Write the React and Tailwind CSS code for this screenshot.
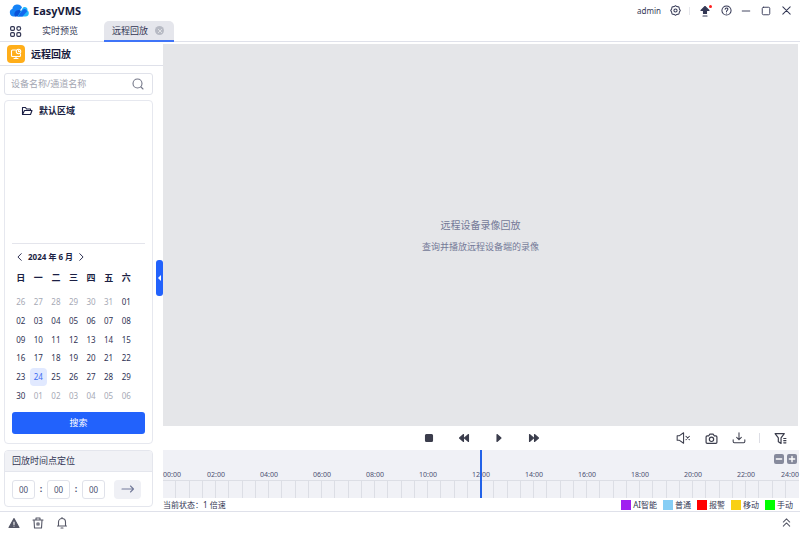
import React from "react";

const weekdays = ["日", "一", "二", "三", "四", "五", "六"];

const days = [
  ...["26", "27", "28", "29", "30", "31"].map((d) => ({ d, out: true })),
  ...Array.from({ length: 30 }, (_, i) => ({ d: String(i + 1).padStart(2, "0"), out: false })),
  ...["01", "02", "03", "04", "05", "06"].map((d) => ({ d, out: true })),
];

const hours = ["02", "04", "06", "08", "10", "12", "14", "16", "18", "20", "22"];

const legend = [
  { label: "AI智能", color: "bg-[#a020f0]" },
  { label: "普通", color: "bg-[#87cef5]" },
  { label: "报警", color: "bg-[#ff0000]" },
  { label: "移动", color: "bg-[#f9d015]" },
  { label: "手动", color: "bg-[#00ff00]" },
];

function Icon({ className = "size-3", children, label }) {
  return (
    <svg
      viewBox="0 0 24 24"
      className={`${className} shrink-0`}
      fill="none"
      stroke="currentColor"
      strokeWidth="2.2"
      strokeLinecap="round"
      strokeLinejoin="round"
      role={label ? "img" : undefined}
      aria-label={label}
      aria-hidden={label ? undefined : true}
    >
      {children}
    </svg>
  );
}

function IconButton({ label, className = "size-3", box = "w-5", children }) {
  return (
    <button type="button" aria-label={label} className={`flex h-5 items-center justify-center ${box}`}>
      <Icon className={className}>{children}</Icon>
    </button>
  );
}

function TitleBar() {
  return (
    <header className="flex h-[21px] shrink-0 items-center pl-[9px] pr-1">
      <svg viewBox="0 0 40 26" className="h-[13px] w-5 shrink-0" aria-hidden="true">
        <path d="M9 25a8 8 0 0 1-2-15.500C7 4 12 1 17 1c5 0 8 3 9 6l-13 18Z" fill="#1683f7" />
        <path d="M12 25c-4-6 1-13 7-13 3 0 5 1 6 3l-5 10Z" fill="#0a53d8" />
        <path d="M17 25 27 9c3-5 11-3 10 4 4 2 4 12-4 12Z" fill="#22b5fb" />
        <path d="m21 20 7-9c4-3 8 0 8 4l-9 10h-8Z" fill="#1268ee" />
      </svg>
      <h1 className="ml-1 text-[11px] leading-4 font-bold text-[#171b3c]">EasyVMS</h1>
      <span className="ml-auto text-[8px]">admin</span>
      <IconButton label="设置" box="ml-1 w-5" className="size-[11px]">
        <path d="M9 3.500 12 1.500l3 2 4.500 1 1 4 2 3.500-2 3.500-1 4-4.500 1-3 2-3-2-4.500-1-1-4-2-3.500 2-3.500 1-4Z" />
        <circle cx="12" cy="12" r="3.500" />
      </IconButton>
      <span className="mx-1 h-2 w-px bg-[#e6e7ec]" />
      <div className="relative">
        <IconButton label="上传" box="w-[22px]">
          <path d="M12 3 4 11h5v6h6v-6h5Z" fill="currentColor" />
          <path d="M8 22h8" />
        </IconButton>
        <span className="absolute right-1 top-1 size-[3px] rounded-full bg-[#ff1f1f]" />
      </div>
      <IconButton label="帮助" box="w-5" className="size-[11px]">
        <circle cx="12" cy="12" r="10" />
        <path d="M9 9.500c0-4 6-4 6-.5 0 2.500-3 2.500-3 5M12 17.500v.2" />
      </IconButton>
      <IconButton label="最小化" className="size-[10px]">
        <path d="M3 12h18" />
      </IconButton>
      <IconButton label="最大化" className="size-[10px]">
        <rect x="3" y="3" width="18" height="18" rx="3" />
      </IconButton>
      <IconButton label="关闭" className="size-[11px]">
        <path d="m4 4 16 16M20 4 4 20" />
      </IconButton>
    </header>
  );
}

function TabBar() {
  return (
    <nav className="flex h-[21px] shrink-0 items-stretch border-b border-[#dfe1ea]">
      <button type="button" aria-label="菜单" className="ml-[9px] flex w-3 items-center justify-center">
        <Icon className="size-[13px]">
          <rect x="3" y="3" width="7" height="7" rx="2" />
          <circle cx="18" cy="6.500" r="3.500" />
          <rect x="3" y="14" width="7" height="7" rx="2" />
          <rect x="14.500" y="14" width="7" height="7" rx="2" />
        </Icon>
      </button>
      <a href="#live" className="ml-[21px] flex w-[62px] items-center">实时预览</a>
      <div className="-mb-px flex w-[70px] items-center rounded-t-[5px] border-b-2 border-[#3f74f8] bg-[#e5e6ec] pl-2">
        <a href="#playback" aria-current="page">远程回放</a>
        <button type="button" aria-label="关闭标签" className="ml-[7px] flex size-[9px] items-center justify-center rounded-full bg-[#b7bac4] text-white">
          <Icon className="size-[6px]">
            <path d="m5 5 14 14M19 5 5 19" />
          </Icon>
        </button>
      </div>
    </nav>
  );
}

function Calendar() {
  return (
    <section className="mx-[7px] border-t border-[#e4e5ec] pt-[7px]" aria-label="日历">
      <div className="flex h-3 items-center pl-[3px] text-[8px] font-bold text-[#1b1f44]">
        <button type="button" aria-label="上个月">
          <Icon className="size-[10px]"><path d="m15 4-8 8 8 8" /></Icon>
        </button>
        <span className="mx-[3px]">2024 年 6 月</span>
        <button type="button" aria-label="下个月">
          <Icon className="size-[10px]"><path d="m9 4 8 8-8 8" /></Icon>
        </button>
      </div>
      <div className="mt-[9px] grid w-[123px] grid-cols-7 text-center text-[9px] leading-3 font-bold text-[#1b1f44]">
        {weekdays.map((w) => (
          <span key={w}>{w}</span>
        ))}
      </div>
      <div className="mt-[9px] grid h-28 w-[123px] grid-cols-7 grid-rows-6 text-[8px]">
        {days.map(({ d, out }, i) => (
          <button
            type="button"
            key={i}
            className={`flex items-center justify-center rounded-[4px] ${
              out ? "text-[#a6a9b5]" : d === "24" ? "bg-[#e1e9ff] text-[#3d6cf2]" : "text-[#2f3354]"
            }`}
          >
            {d}
          </button>
        ))}
      </div>
      <button type="button" className="mt-[7px] mb-[9px] h-[22px] w-full rounded-[3px] bg-[#2262fc] text-white">
        搜索
      </button>
    </section>
  );
}

function TimeBox({ label }) {
  return (
    <input
      aria-label={label}
      defaultValue="00"
      className="h-[19px] w-[23px] rounded-[3px] border border-[#e0e2ea] bg-white text-center text-[8px] text-[#4b5072]"
    />
  );
}

function Sidebar() {
  return (
    <aside className="relative flex w-[163px] shrink-0 flex-col">
      <div className="flex h-6 shrink-0 items-center border-b border-[#dfe1ea] pl-[7px]">
        <span className="flex size-[18px] items-center justify-center rounded-[4px] bg-[#ffae1a] text-white">
          <Icon className="size-3">
            <path d="M11 4H5a2 2 0 0 0-2 2v9a2 2 0 0 0 2 2h14a2 2 0 0 0 2-2v-3M8 21h8M12 17v4" />
            <circle cx="17" cy="7" r="4.500" />
            <path d="M17 5v2h2" />
          </Icon>
        </span>
        <h2 className="ml-1.5 text-[10px] font-bold text-[#171b3c]">远程回放</h2>
      </div>

      <div className="flex min-h-0 flex-1 flex-col pt-[7px] pr-[10px] pb-1 pl-1">
        <label className="flex h-[22px] shrink-0 items-center rounded-[3px] border border-[#e0e2ea] pl-1.5 pr-2">
          <input
            type="search"
            aria-label="设备名称/通道名称"
            placeholder="设备名称/通道名称"
            className="min-w-0 flex-1 bg-transparent text-[9px] placeholder:text-[#a3a6b2]"
          />
          <Icon className="size-3 text-[#737687]">
            <circle cx="11" cy="11" r="9" />
            <path d="m18 18 4 4" />
          </Icon>
        </label>

        <div className="mt-[5px] flex min-h-0 flex-1 flex-col rounded-[4px] border border-[#e6e8ef]">
          <div className="min-h-0 flex-1">
            <div className="flex h-5 items-center pl-4 font-bold text-[#1b1f44]">
              <Icon className="size-3">
                <path d="M3 19V5h6l2 3h8v3M3 19l4-8h15l-3 8Z" />
              </Icon>
              <span className="ml-1.5">默认区域</span>
            </div>
          </div>
          <Calendar />
        </div>

        <section className="mt-1.5 shrink-0 rounded-[4px] border border-[#e4e6ed]">
          <h3 className="flex h-[21px] items-center rounded-t-[3px] border-b border-[#e4e6ed] bg-[#f1f2f6] pl-[7px]">
            回放时间点定位
          </h3>
          <div className="flex h-[34px] items-center pl-[7px] text-[#4b5072]">
            <TimeBox label="时" />
            <span className="w-3 text-center font-bold">:</span>
            <TimeBox label="分" />
            <span className="w-3 text-center font-bold">:</span>
            <TimeBox label="秒" />
            <button type="button" aria-label="定位" className="ml-[9px] flex h-[19px] w-[27px] items-center justify-center rounded-[4px] bg-[#eff0f5] text-[#747b9b]">
              <Icon className="h-3 w-[14px]">
                <path d="M0 12h23M17 6l6 6-6 6" />
              </Icon>
            </button>
          </div>
        </section>
      </div>

      <button
        type="button"
        aria-label="收起侧栏"
        className="absolute right-0 top-[218px] flex h-9 w-[7px] items-center justify-center rounded-[3px] bg-[#2262fc] text-white"
      >
        <svg viewBox="0 0 4 8" className="h-2 w-[3px]" aria-hidden="true">
          <path d="M4 0v8L0 4Z" fill="currentColor" />
        </svg>
      </button>
    </aside>
  );
}

function Controls() {
  return (
    <div className="grid h-6 shrink-0 grid-cols-[1fr_auto_1fr] items-center text-[#3b3d4c]">
      <div className="col-start-2 flex gap-[15px]">
        <IconButton label="停止">
          <rect x="5" y="5" width="14" height="14" rx="2" fill="currentColor" />
        </IconButton>
        <IconButton label="快退">
          <path d="M11 5v14l-8-7ZM21 5v14l-8-7Z" fill="currentColor" />
        </IconButton>
        <IconButton label="播放">
          <path d="M8 5v14l8-7Z" fill="currentColor" />
        </IconButton>
        <IconButton label="快进">
          <path d="M3 5v14l8-7ZM13 5v14l8-7Z" fill="currentColor" />
        </IconButton>
      </div>
      <div className="flex items-center justify-end pr-1.5">
        <IconButton label="静音" box="w-7" className="size-[14px]">
          <path d="M2 8h4l7-5v18l-7-5H2ZM17 9l6 6M23 9l-6 6" strokeWidth="1.800" />
        </IconButton>
        <IconButton label="截图" box="w-7" className="size-[13px]">
          <path d="M4 7h3l2-3h6l2 3h3q2 0 2 2v10q0 2-2 2H4q-2 0-2-2V9q0-2 2-2Z" />
          <circle cx="12" cy="13.500" r="4" />
        </IconButton>
        <IconButton label="下载" box="w-7" className="size-[14px]">
          <path d="M12 3v12M8 11l4 4 4-4M2 15v3q0 2 2 2h16q2 0 2-2v-3" strokeWidth="1.800" />
        </IconButton>
        <span className="mx-1.5 h-[10px] w-px bg-[#dddee5]" />
        <IconButton label="筛选" box="w-7" className="size-[13px]">
          <path d="M2 3h17l-6 8v10l-5-3v-7ZM18 12h4M18 16h4M18 20h4" />
        </IconButton>
      </div>
    </div>
  );
}

function Timeline() {
  return (
    <section aria-label="时间轴" className="relative mr-px flex h-12 shrink-0 flex-col bg-[#f0f1f6]">
      <div className="flex h-[18px] shrink-0 items-end justify-end gap-[3px] pb-1 pr-0.5 text-white">
        <button type="button" aria-label="缩小" className="flex size-[10px] items-center justify-center rounded-[2px] bg-[#868a9c]">
          <Icon className="size-2"><path d="M4 12h16" strokeWidth="4" /></Icon>
        </button>
        <button type="button" aria-label="放大" className="flex size-[10px] items-center justify-center rounded-[2px] bg-[#868a9c]">
          <Icon className="size-2"><path d="M4 12h16M12 4v16" strokeWidth="4" /></Icon>
        </button>
      </div>
      <div className="grid h-3 grid-cols-24 items-end text-center text-[7px] leading-[10px] text-[#4b5072]">
        <span className="text-left">00:00</span>
        {hours.map((h) => (
          <span key={h} className="col-span-2">{h}:00</span>
        ))}
        <span className="flex justify-end">24:00</span>
      </div>
      <div className="grid flex-1 grid-cols-48 border-t border-[#dcdee5]">
        {Array.from({ length: 48 }, (_, i) => (
          <span key={i} className="border-r border-[#dcdee5] last:border-r-0" />
        ))}
      </div>
      <span className="absolute inset-y-0 left-1/2 w-0.5 -translate-x-1/2 bg-[#2262e8]" />
    </section>
  );
}

export default function App() {
  return (
    <div className="flex h-screen flex-col overflow-hidden bg-white font-['Noto_Sans','Noto_Sans_CJK_SC',sans-serif] text-[9px] leading-3 text-[#333754]">
      <TitleBar />
      <TabBar />
      <div className="flex min-h-0 flex-1">
        <Sidebar />
        <main className="flex min-w-0 flex-1 flex-col pt-0.5">
          <div className="mr-0.5 flex min-h-0 flex-1 flex-col items-center justify-center gap-[10px] bg-[#e5e6e9] pt-0.5 text-[#747a98]">
            <p className="text-[10px]">远程设备录像回放</p>
            <p>查询并播放远程设备端的录像</p>
          </div>
          <Controls />
          <Timeline />
          <div className="flex h-[13px] shrink-0 items-center justify-between pr-[7px] text-[8px]">
            <span>当前状态：1 倍速</span>
            <ul className="flex gap-1.5">
              {legend.map(({ label, color }) => (
                <li key={label} className="flex items-center gap-0.5">
                  <span className={`size-[10px] ${color}`} />
                  {label}
                </li>
              ))}
            </ul>
          </div>
        </main>
      </div>
      <footer className="flex h-[22px] shrink-0 items-center border-t border-[#dfe1ea] px-1 text-[#555766]">
        <IconButton label="告警">
          <path d="M12 3 2 21h20Z" fill="currentColor" />
          <path d="M12 10v5M12 18v.2" stroke="white" />
        </IconButton>
        <IconButton label="删除" box="ml-1 w-5">
          <path d="M2 6h20M8 6V2h8v4M4 6l1 16h14l1-16M10 12v4h4v-4Z" />
        </IconButton>
        <IconButton label="通知" box="ml-1 w-5">
          <path d="M5 18V10a7 7 0 0 1 14 0v8M3 18h18M10 22h4M12 1v2" />
        </IconButton>
        <span className="flex-1" />
        <IconButton label="展开" className="size-[11px]">
          <path d="m5 11 7-7 7 7M5 20l7-7 7 7" />
        </IconButton>
      </footer>
    </div>
  );
}
